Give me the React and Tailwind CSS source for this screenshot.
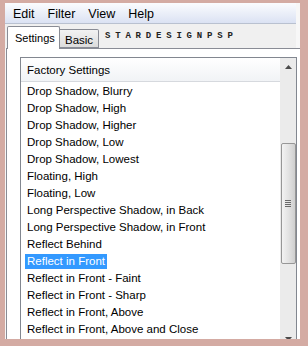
import React from 'react';

const presets = [
    'Drop Shadow, Blurry',
    'Drop Shadow, High',
    'Drop Shadow, Higher',
    'Drop Shadow, Low',
    'Drop Shadow, Lowest',
    'Floating, High',
    'Floating, Low',
    'Long Perspective Shadow, in Back',
    'Long Perspective Shadow, in Front',
    'Reflect Behind',
    'Reflect in Front',
    'Reflect in Front - Faint',
    'Reflect in Front - Sharp',
    'Reflect in Front, Above',
    'Reflect in Front, Above and Close',
];

const selected = 'Reflect in Front';

function ScrollBar() {
    return (
        <div className="w-[16px] shrink-0 bg-[#ebebeb] flex flex-col items-center">
            <div className="h-[17px] w-full flex items-center justify-center">
                <svg width="7" height="4" viewBox="0 0 7 4">
                    <path d="M0 4 L3.5 0 L7 4 Z" fill="#4a4a4a" />
                </svg>
            </div>
            <div className="h-[68px]" />
            <div className="w-[15px] h-[121px] rounded-[2px] border border-[#979797] bg-gradient-to-r from-[#f3f3f3] via-[#e3e3e3] to-[#cfcfcf] flex flex-col items-center justify-center gap-[1px]">
                <div className="w-[6px] h-[1px] bg-[#6a6a6a]" />
                <div className="w-[6px] h-[1px] bg-[#6a6a6a]" />
                <div className="w-[6px] h-[1px] bg-[#6a6a6a]" />
                <div className="w-[6px] h-[1px] bg-[#6a6a6a]" />
            </div>
            <div className="flex-1" />
            <div className="h-[17px] w-full flex items-center justify-center">
                <svg width="7" height="4" viewBox="0 0 7 4">
                    <path d="M0 0 L7 0 L3.5 4 Z" fill="#4a4a4a" />
                </svg>
            </div>
        </div>
    );
}

export default function App() {
    return (
        <div
            className="w-[308px] h-[346px] bg-[#d4aba3] pt-[3px] pl-[5px] overflow-hidden text-black"
            style={{ fontFamily: '"Liberation Sans", Arial, sans-serif' }}
        >
            <div className="w-[295px] h-[336px] bg-[#f7f7f7] flex flex-col overflow-hidden">
                {/* menu bar */}
                <div className="w-[291px] h-[21px] shrink-0 bg-gradient-to-b from-[#fbfcfe] to-[#dbe2f3] border-b border-[#b9c1d0] flex items-center text-[12.5px] pl-[8px] pt-[2px] gap-[13px]">
                    <span>Edit</span>
                    <span>Filter</span>
                    <span>View</span>
                    <span>Help</span>
                </div>

                {/* tab strip */}
                <div className="w-[291px] h-[24px] shrink-0 bg-[#f0f0f0] flex items-end pl-[2px] relative">
                    <div className="h-[23px] w-[53px] bg-white border border-b-0 border-[#898c95] rounded-t-[2px] text-[11px] leading-[14px] pl-[7px] pt-[4px] relative top-[1px] z-10 whitespace-nowrap">
                        Settings
                    </div>
                    <div className="h-[19px] w-[39px] bg-gradient-to-b from-[#f2f2f2] to-[#dcdcdc] border border-l-0 border-[#898c95] rounded-tr-[2px] text-[11.5px] leading-[14px] pl-[5px] pt-[3px]">
                        Basic
                    </div>
                    <div
                        className="ml-[6px] mb-[7px] text-[9px] leading-[9px] font-bold tracking-[4.8px] text-[#222]"
                        style={{ fontFamily: '"Liberation Mono", monospace' }}
                    >
                        STARDESIGNPSP
                    </div>
                </div>

                {/* tab panel */}
                <div className="flex-1 ml-[1px] bg-white border-l border-t border-[#898c95] pt-[8px] pl-[13px]">
                    <div className="w-[277px] h-[290px] border-l border-t border-r border-[#828790] flex">
                        <div className="flex-1 flex flex-col">
                            <div className="h-[24px] shrink-0 bg-gradient-to-b from-white to-[#f1f3f6] border-b border-[#d6d9de] flex items-center pl-[6px] pt-[2px] text-[11.5px]">
                                Factory Settings
                            </div>
                            {presets.map((p) => (
                                <div key={p} className="h-[17px] flex items-center pl-[4px] pt-[1px] text-[11.5px] whitespace-nowrap">
                                    <span
                                        className={
                                            p === selected
                                                ? 'px-[2px] h-[15px] leading-[15px] bg-[#3399ff] text-white'
                                                : 'px-[2px] h-[15px] leading-[15px]'
                                        }
                                    >
                                        {p}
                                    </span>
                                </div>
                            ))}
                        </div>
                        <ScrollBar />
                    </div>
                </div>
            </div>
        </div>
    );
}
